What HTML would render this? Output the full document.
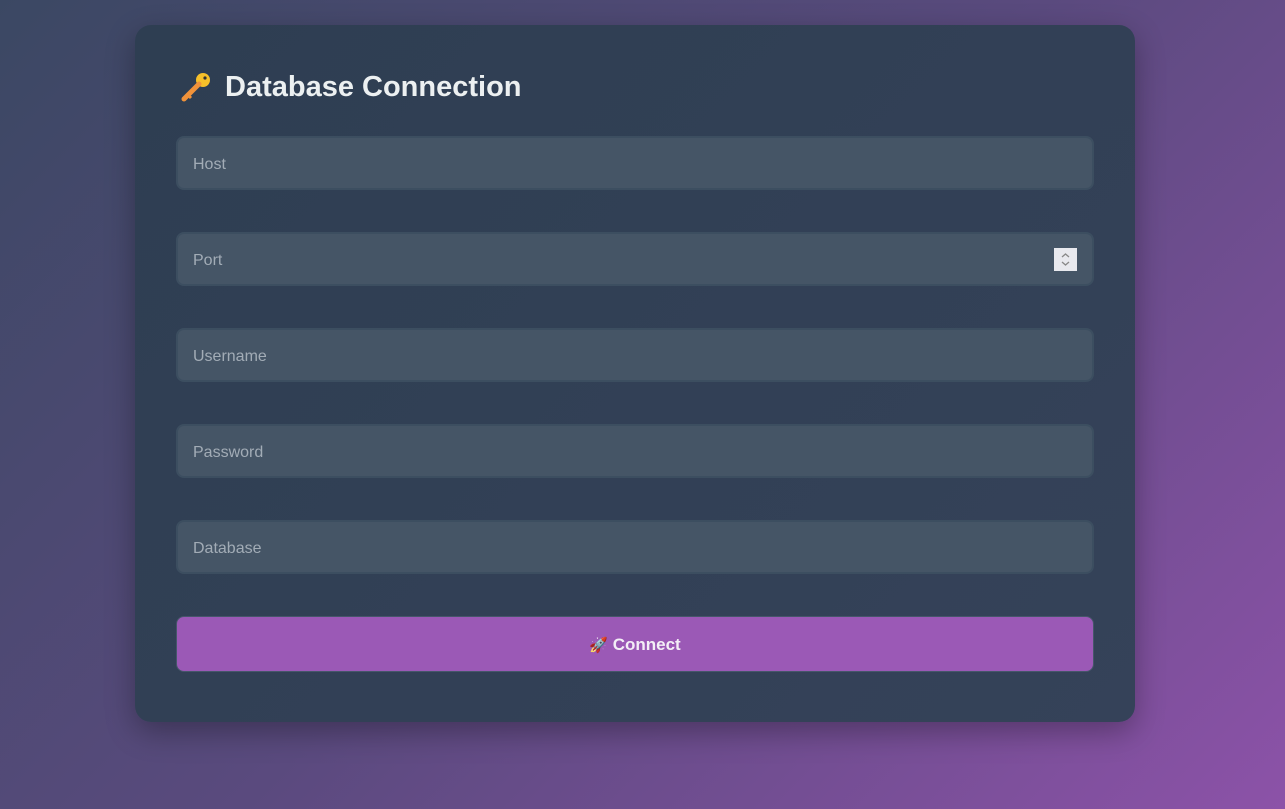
<!DOCTYPE html>
<html><head><style>
html,body{margin:0;height:100%;}
body{width:1285px;height:809px;background:linear-gradient(135deg,#3b4863 0%,#5a4a7e 50%,#8c52a8 100%);font-family:"Liberation Sans","DejaVu Sans",sans-serif;position:relative;overflow:hidden;}
.card{position:absolute;left:135px;top:25px;width:1000px;height:697px;border-radius:16px;background:linear-gradient(135deg,#2e3e52,#354259);box-shadow:0 10px 30px rgba(0,0,0,0.3);box-sizing:border-box;}
h1{position:absolute;left:44px;top:45px;margin:0;font-size:29px;font-weight:bold;color:#ecf0f1;display:flex;align-items:center;}
.key{margin-right:12px;width:34px;height:34px}
.in{position:absolute;left:41px;width:918px;height:54px;box-sizing:border-box;border:2px solid #3c4e60;border-radius:8px;background:#455566;color:#a2acb6;font-size:16px;padding:2px 15px 0;line-height:50px;}
.spin{position:absolute;right:15px;top:14px;width:23px;height:23px;background:#e8e9ee;line-height:0;}
.spin svg{display:block}
.btn{position:absolute;left:41px;top:591px;width:918px;height:56px;box-sizing:border-box;border:1px solid #46566a;border-radius:8px;background:#9b59b6;color:#f3eef6;font-size:17px;font-weight:bold;text-align:center;line-height:56px;}
</style></head><body>
<div class="card">
<h1><svg class="key" viewBox="0 0 34 34"><circle cx="24" cy="10" r="7" fill="#f6c02a"/><circle cx="26" cy="8" r="1.6" fill="#333"/><path d="M20 14 L5 29" stroke="#f0923a" stroke-width="5" stroke-linecap="round"/><path d="M9 25 l3 3" stroke="#f0923a" stroke-width="3"/></svg>Database Connection</h1>
<div class="in" style="top:111px">Host</div>
<div class="in" style="top:207px">Port<div class="spin"><svg width="23" height="23" viewBox="0 0 23 23"><path d="M8 9l3.5-3 3.5 3M8 14l3.5 3 3.5-3" stroke="#888" stroke-width="1.3" fill="none"/></svg></div></div>
<div class="in" style="top:303px">Username</div>
<div class="in" style="top:399px">Password</div>
<div class="in" style="top:495px">Database</div>
<div class="btn"><span style="font-size:15px">🚀</span> Connect</div>
</div>
</body></html>
